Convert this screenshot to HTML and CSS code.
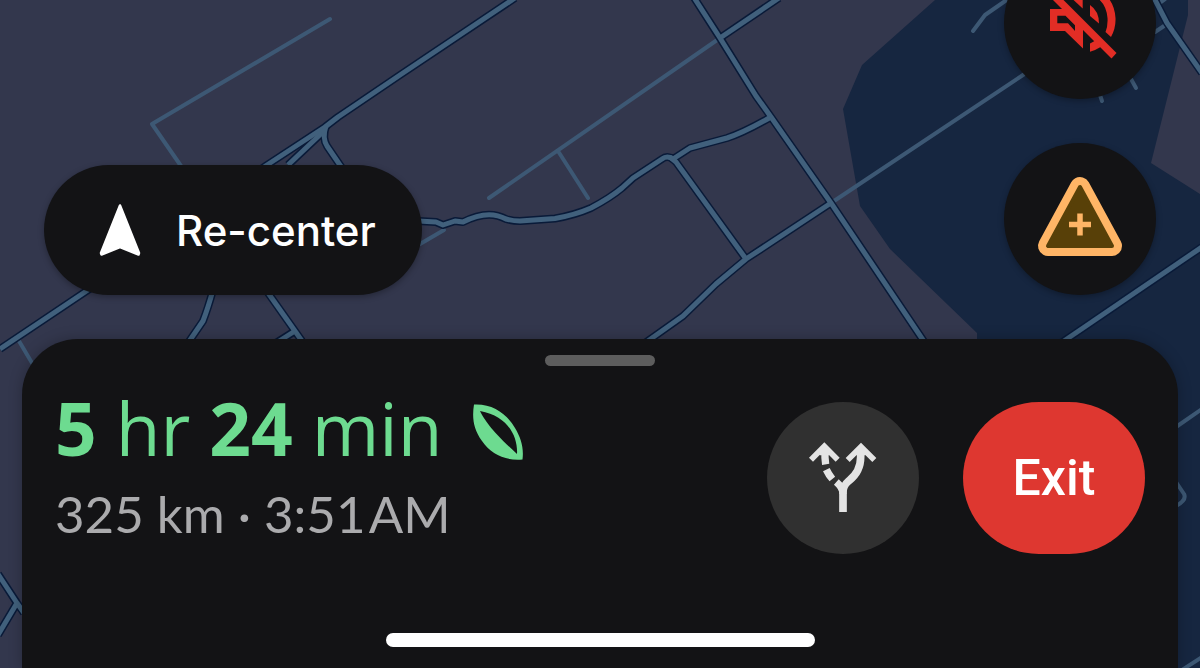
FILE: index.html
```html
<!DOCTYPE html>
<html lang="en">
<head>
<meta charset="utf-8">
<meta name="viewport" content="width=device-width, initial-scale=1">
<title>Navigation</title>
<link rel="stylesheet" href="styles.css">
</head>
<body>
<main class="screen">
  <svg class="map" viewBox="0 0 1200 668" preserveAspectRatio="xMidYMid slice" aria-hidden="true">
    <defs>
      <g id="roads">
        <path d="M515-2 400 75 338 117 325 127 267 165 88 290 0 349"/>
        <path d="M325 130 288 165"/>
        <path d="M326 126Q322 138 327 146L344 171"/>
        <path d="M213 290Q208 308 203 321L188 343"/>
        <path d="M266 290 302 341"/>
        <path d="M295 331 276 343"/>
        <path d="M693-4 720 38 756 96 771 117 831 203 925 343"/>
        <path d="M779-2 720 38"/>
        <path d="M418 221 436 222 443 225 455 221 463 222Q488 209 506 219 513 221 520 221L555 218.500Q575 215 591 208 610 198 622 188L633 178 662 159Q667 155 673 159L690 148 727 138Q743 133 771 117"/>
        <path d="M670 157 676 162 746 259"/>
        <path d="M645 343 683 316 716 284 746 259 831 203"/>
        <path d="M1153-4 1167 23 1202 73"/>
        <path d="M1061 343 1202 247"/>
        <path d="M-2 574 17 603 24 613M17 603-2 635"/>
      </g>
    </defs>
    <path class="water" d="M935 0 862 65 843 109 860 206 890 249 977 333V668H1200V194L1151 163 1188 15V0Z"/>
    <g class="minor">
      <path d="M330 19 152 124 181 166"/>
      <path d="M19 341 32 363"/>
      <path d="M720 38 489 198M558 151 588 198"/>
      <path d="M420 244 444 230"/>
      <path d="M831 203 1026 73"/>
      <path d="M973 31 985 15 1008-1"/>
      <path d="M1100 95 1102 101M1131 79 1136 88"/>
      <path d="M1155 32 1167 24M1158 4 1165-1"/>
      <path d="M1176 427 1202 409M1176 482 1184 494Q1187 500 1176 506M1182 670 1202 657"/>
    </g>
    <use class="casing" href="#roads"/>
    <use class="road" href="#roads"/>
  </svg>

  <section class="controls" aria-label="Map controls">
    <button class="pill" type="button">
      <svg class="pill-icon" viewBox="0 0 42 52" aria-hidden="true"><path d="M21 1.500 40 49 39.500 50.500 21 43 2.500 50.500 2 49Z" fill="#fff" stroke="#fff" stroke-width="2.500" stroke-linejoin="round"/></svg>
      <span>Re-center</span>
    </button>
    <div class="stack">
      <button class="round" type="button" aria-label="Unmute voice guidance">
        <svg viewBox="1004 -53 152 152" fill="#e22d25" aria-hidden="true">
          <path d="M1045-8 1111.500 58.500 1116.500 53 1055-8.500Z"/>
          <path fill-rule="evenodd" d="M1050 9H1063L1083 29V48.500L1065 31H1050ZM1057.300 15.700V23.300H1068L1075 31V25.300L1065.500 15.700Z"/>
          <path d="M1082.700 8.500V-9L1073-.5Z"/>
          <path d="M1090 5Q1099 11 1099 23.500L1090 16Z"/>
          <path d="M1090-14Q1114-6 1115.500 18 1116 28 1111 37L1105.500 32Q1108 26 1107.500 18 1106 0 1090-6Z"/>
          <path d="M1090 43.500 1095.500 40.500 1101.500 46.500Q1096 50 1090 51.700Z"/>
        </svg>
      </button>
      <button class="round" type="button" aria-label="Report incident">
        <svg viewBox="1004 143 152 152" aria-hidden="true">
          <g stroke-linejoin="round">
            <path d="M1080 187 1048 246H1112Z" fill="#ffb566" stroke="#ffb566" stroke-width="20"/>
            <path d="M1080 187 1048 246H1112Z" fill="#584008" stroke="#584008" stroke-width="4"/>
          </g>
          <path d="M1080 213.500V235.500M1069 224.500H1091" stroke="#ffb566" stroke-width="5.500"/>
        </svg>
      </button>
    </div>
  </section>

  <section class="sheet" aria-label="Trip summary">
    <div class="handle"></div>
    <div class="trip">
      <div class="summary">
        <h1 class="eta"><span><b>5</b> hr <b>24</b> min</span>
          <svg class="leaf" viewBox="0 0 50 56" aria-hidden="true"><path fill-rule="evenodd" d="M1 .500C20-.5 34 10 42 24 48 34 51 44 49.500 55.500 32 57 18 50 9 37 0 25-1 13 1 .500ZM7 7C12 17 20 28 44 50 45 34 36 12 7 7Z" fill="#6ddb90"/></svg>
        </h1>
        <p class="detail">325 km · 3:51&#8202;AM</p>
      </div>
      <button class="round routes" type="button" aria-label="Alternate routes">
        <svg viewBox="-69 -70 456 456" fill="none" stroke="#e4e4e4" aria-hidden="true">
          <path d="M63 103 103 63 143 103M173 104 213 64 253 104" stroke-width="17"/>
          <path d="M103 60 124 82 116 90H90L82 82ZM213 60 234 82 226 90H200L192 82Z" fill="#e4e4e4" stroke="none"/>
          <path d="M212 72V95C212 128 195 152 177 166 163 178 159 186 159 202V260" stroke-width="23"/>
          <path d="M105 72Q104 98 107 117M109 133Q116 148 127 161M139 170Q159 187 159 206" stroke-width="22"/>
        </svg>
      </button>
      <button class="exit" type="button">Exit</button>
    </div>
    <div class="home"></div>
  </section>
</main>
</body>
</html>
```
FILE: styles.css
```css
* { box-sizing: border-box; }

body {
  margin: 0;
  background: #33374d;
  font-family: Lato, "Open Sans", sans-serif;
}

button {
  margin: 0;
  padding: 0;
  border: 0;
  color: #fff;
  cursor: pointer;
}

.screen {
  position: relative;
  display: flex;
  flex-direction: column;
  height: 100vh;
  overflow: hidden;
}

.map {
  position: absolute;
  inset: 0;
  width: 100%;
  height: 100%;
}

.water { fill: #162640; }

.minor,
.casing,
.road {
  fill: none;
  stroke: #3d5874;
  stroke-width: 4;
  stroke-linejoin: round;
}

.minor { stroke-linecap: round; }
.casing { stroke: #091a38; stroke-width: 8; }
.road { stroke: #41607c; stroke-width: 5; }

.controls {
  position: relative;
  display: flex;
  flex: 1;
  align-items: flex-end;
  justify-content: space-between;
  min-height: 0;
  padding: 0 44px 44px;
}

.pill {
  display: flex;
  align-items: center;
  gap: 35px;
  height: 130px;
  padding: 0 46px 0 55px;
  border-radius: 65px;
  background: #131315;
  box-shadow: 0 2px 6px rgba(0, 0, 0, 0.3);
  font: 500 42px Inter, sans-serif;
}

.pill-icon { width: 42px; height: 52px; }

.stack {
  display: flex;
  flex-direction: column;
  gap: 44px;
}

.round {
  flex: none;
  width: 152px;
  height: 152px;
  border-radius: 50%;
  background: #131315;
  box-shadow: 0 2px 6px rgba(0, 0, 0, 0.3);
}

.round svg {
  display: block;
  width: 100%;
  height: 100%;
}

.sheet {
  position: relative;
  display: flex;
  flex-direction: column;
  align-items: center;
  margin: 0 22px;
  padding: 16px 33px 21px;
  border-radius: 56px 56px 0 0;
  background: #131315;
  box-shadow: 0 0 14px rgba(0, 0, 0, 0.25);
}

.handle {
  width: 110px;
  height: 11px;
  border-radius: 6px;
  background: #5d5d5d;
}

.trip {
  display: flex;
  align-self: stretch;
  align-items: flex-start;
  gap: 44px;
  margin-top: 36px;
}

.summary { flex: 1; }

.eta {
  display: flex;
  align-items: flex-start;
  gap: 30px;
  margin: 0;
  color: #6ddb90;
  font-family: "Open Sans", sans-serif;
  font-size: 73px;
  font-weight: 400;
  line-height: 52px;
}

.leaf {
  width: 50px;
  height: 56px;
  margin-top: 2px;
}

.detail {
  margin: 22px 0 0;
  color: #ababad;
  font-size: 51px;
  line-height: 64px;
}

.routes { background: #303030; box-shadow: none; }

.exit {
  flex: none;
  width: 182px;
  height: 152px;
  border-radius: 76px;
  background: #de3730;
  font: 500 50px Roboto, sans-serif;
}

.home {
  width: 429px;
  height: 14px;
  margin-top: 79px;
  border-radius: 7px;
  background: #fff;
}
```
